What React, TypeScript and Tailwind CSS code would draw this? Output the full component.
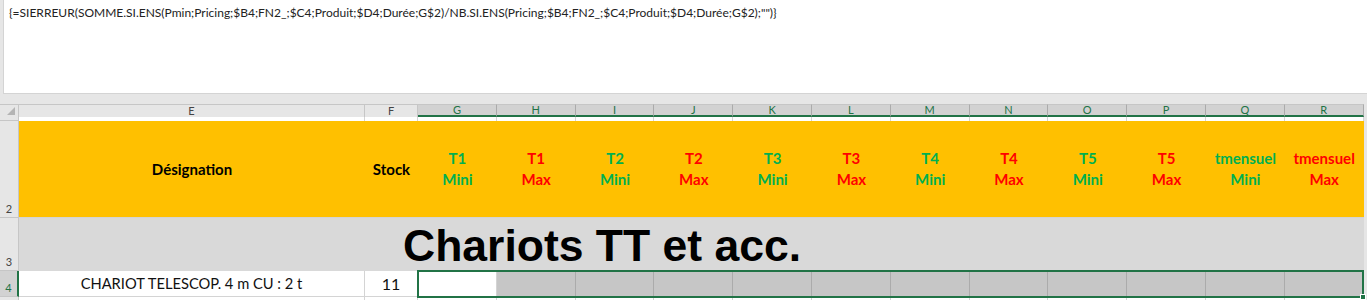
import React from 'react';

const FORMULA =
  '{=SIERREUR(SOMME.SI.ENS(Pmin;Pricing;$B4;FN2_;$C4;Produit;$D4;Durée;G$2)/NB.SI.ENS(Pricing;$B4;FN2_;$C4;Produit;$D4;Durée;G$2);"")}';

interface Period {
  col: string;
  top: string;
  bottom: string;
  red: boolean;
}

const periods: Period[] = [
  { col: 'G', top: 'T1', bottom: 'Mini', red: false },
  { col: 'H', top: 'T1', bottom: 'Max', red: true },
  { col: 'I', top: 'T2', bottom: 'Mini', red: false },
  { col: 'J', top: 'T2', bottom: 'Max', red: true },
  { col: 'K', top: 'T3', bottom: 'Mini', red: false },
  { col: 'L', top: 'T3', bottom: 'Max', red: true },
  { col: 'M', top: 'T4', bottom: 'Mini', red: false },
  { col: 'N', top: 'T4', bottom: 'Max', red: true },
  { col: 'O', top: 'T5', bottom: 'Mini', red: false },
  { col: 'P', top: 'T5', bottom: 'Max', red: true },
  { col: 'Q', top: 'tmensuel', bottom: 'Mini', red: false },
  { col: 'R', top: 'tmensuel', bottom: 'Max', red: true },
];

const RowHead: React.FC<{ label?: string; active?: boolean }> = ({ label, active }) => (
  <div
    className={
      active
        ? 'flex items-end justify-center bg-[#d2d2d2] border-r-2 border-[#217346] border-b border-b-[#c6c6c6] text-[11px] leading-none pb-[3px] text-[#217346]'
        : 'flex items-end justify-center bg-[#e6e6e6] border-r border-b border-[#c6c6c6] text-[11px] leading-none pb-[3px] text-[#444]'
    }
  >
    {label}
  </div>
);

const App: React.FC = () => {
  return (
    <div className="w-[1367px] h-[300px] overflow-hidden bg-[#e6e6e6] font-['Lato','Open_Sans',sans-serif]">
      {/* formula bar */}
      <div className="h-[94px] pl-[3px]">
        <div className="h-full bg-white border-l border-b border-[#d4d4d4] pl-[5px] pt-[6px] text-[12px] leading-[14px] text-[#222]">
          {FORMULA}
        </div>
      </div>

      <div className="h-[10px]" />

      {/* sheet */}
      <div className="relative grid grid-cols-[19px_346px_53px_repeat(12,78.8px)] grid-rows-[13px_4px_97px_53px_26px_10px] w-[1364px]">
        {/* column headers */}
        <div className="relative bg-[#e6e6e6] border-r border-t border-[#c6c6c6]">
          <div className="absolute right-[3px] bottom-[2px] w-0 h-0 border-l-[8px] border-l-transparent border-b-[8px] border-b-[#b4b4b4]" />
        </div>
        <div className="flex items-center justify-center bg-[#e6e6e6] border-r border-t border-[#c6c6c6] text-[11px] text-[#444]">
          E
        </div>
        <div className="flex items-center justify-center bg-[#e6e6e6] border-r border-t border-[#c6c6c6] text-[11px] text-[#444]">
          F
        </div>
        {periods.map((p) => (
          <div
            key={p.col}
            className="flex items-center justify-center bg-[#d2d2d2] border-r border-t border-[#ababab] border-t-[#c6c6c6] border-b-2 border-b-[#217346] text-[11px] text-[#217346]"
          >
            {p.col}
          </div>
        ))}

        {/* row 1 (hidden, very small) */}
        <div className="bg-[#e6e6e6] border-r border-b border-[#c6c6c6]" />
        <div className="bg-white border-r border-[#d4d4d4]" />
        <div className="bg-white border-r border-[#d4d4d4]" />
        {periods.map((p) => (
          <div key={p.col} className="bg-white border-r border-[#d4d4d4]" />
        ))}

        {/* row 2 */}
        <RowHead label="2" />
        <div className="col-span-14 grid grid-cols-[346px_53px_repeat(12,78.8px)] bg-[#ffc000] border-b border-[#d4d4d4] text-[15px] font-bold leading-[21px]">
          <div className="flex items-center justify-center text-black">Désignation</div>
          <div className="flex items-center justify-center text-black">Stock</div>
          {periods.map((p) => (
            <div
              key={p.col}
              className={`flex flex-col items-center justify-center ${p.red ? 'text-[#ff0000]' : 'text-[#00b050]'}`}
            >
              <span>{p.top}</span>
              <span>{p.bottom}</span>
            </div>
          ))}
        </div>

        {/* row 3 */}
        <RowHead label="3" />
        <div className="col-span-14 flex items-end bg-[#d9d9d9] pl-[384px] pb-[3px] font-['Liberation_Sans',Arial,sans-serif] text-[44.5px] font-bold leading-none text-black">
          Chariots TT et acc.
        </div>

        {/* row 4 */}
        <RowHead label="4" active />
        <div className="flex items-center justify-center bg-white border-r border-b border-[#d4d4d4] text-[14.7px] text-[#111]">
          CHARIOT TELESCOP. 4 m CU : 2 t
        </div>
        <div className="flex items-center justify-center bg-white border-r border-b border-[#d4d4d4] text-[16px] text-[#111]">
          11
        </div>
        {periods.map((p, i) => (
          <div
            key={p.col}
            className={i === 0 ? 'bg-white border-r border-b border-[#d4d4d4]' : 'bg-[#c6c6c6] border-r border-b border-[#ababab]'}
          />
        ))}

        {/* row 5 */}
        <RowHead />
        <div className="bg-white border-r border-[#d4d4d4]" />
        <div className="bg-white border-r border-[#d4d4d4]" />
        {periods.map((p) => (
          <div key={p.col} className="bg-white border-r border-[#d4d4d4]" />
        ))}

        {/* selection outline G4:R4 */}
        <div className="pointer-events-none absolute left-[417px] top-[166px] w-[947px] h-[28px] border-2 border-[#217346]" />
        <div className="pointer-events-none absolute left-[1360px] top-[190px] w-[6px] h-[6px] bg-[#217346] border border-white" />
      </div>
    </div>
  );
};

export default App;
